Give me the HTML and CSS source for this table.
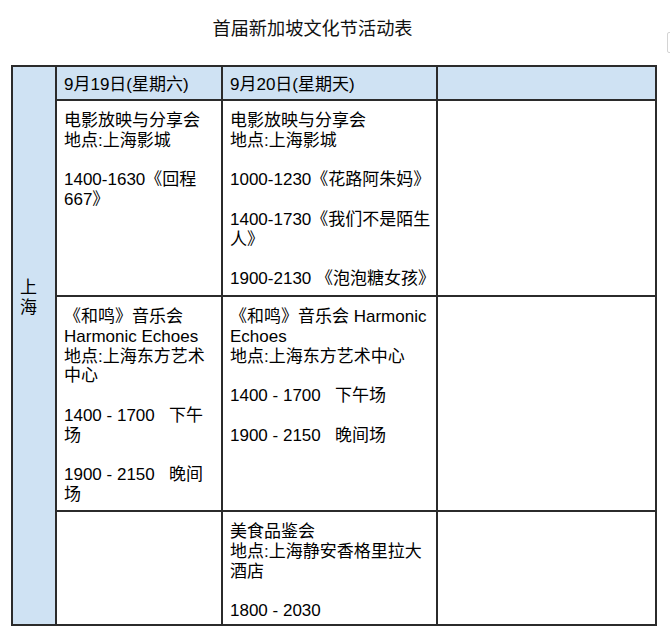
FILE: index.html
```html
<!DOCTYPE html>
<html lang="zh-CN">
<head>
<meta charset="utf-8">
<title>首届新加坡文化节活动表</title>
<link rel="stylesheet" href="styles.css">
</head>
<body>
<div class="page">
  <h1 class="title">首届新加坡文化节活动表</h1>
  <div class="side-handle"></div>
  <div class="schedule">
    <div class="cell label">上海</div>
    <div class="cell head">9月19日(星期六)</div>
    <div class="cell head">9月20日(星期天)</div>
    <div class="cell head"></div>

    <div class="cell body c1">
      <p>电影放映与分享会<br>地点:上海影城</p>
      <p>1400-1630《回程667》</p>
    </div>
    <div class="cell body c2">
      <p>电影放映与分享会<br>地点:上海影城</p>
      <p>1000-1230《花路阿朱妈》</p>
      <p>1400-1730《我们不是陌生人》</p>
      <p>1900-2130 《泡泡糖女孩》</p>
    </div>
    <div class="cell body c3"></div>

    <div class="cell body c1">
      <p>《和鸣》音乐会 Harmonic Echoes<br>地点:上海东方艺术中心</p>
      <p>1400 - 1700&nbsp;&nbsp; 下午场</p>
      <p>1900 - 2150&nbsp;&nbsp; 晚间场</p>
    </div>
    <div class="cell body c2">
      <p>《和鸣》音乐会 Harmonic Echoes<br>地点:上海东方艺术中心</p>
      <p>1400 - 1700&nbsp;&nbsp; 下午场</p>
      <p>1900 - 2150&nbsp;&nbsp; 晚间场</p>
    </div>
    <div class="cell body c3"></div>

    <div class="cell body c1"></div>
    <div class="cell body c2">
      <p>美食品鉴会<br>地点:上海静安香格里拉大酒店</p>
      <p>1800 - 2030</p>
    </div>
    <div class="cell body c3"></div>
  </div>
</div>
</body>
</html>
```

FILE: styles.css
```css
* {
  box-sizing: border-box;
}

html, body {
  margin: 0;
  padding: 0;
  background: #ffffff;
}

body {
  font-family: "Liberation Sans", "Noto Sans CJK SC", sans-serif;
  font-size: 17px;
  color: #000000;
}

.page {
  position: relative;
  width: 670px;
  height: 637px;
  overflow: hidden;
}

.title {
  margin: 0;
  padding-top: 18px;
  width: 625px;
  height: 65px;
  text-align: center;
  font-family: "Noto Sans CJK SC", sans-serif;
  font-size: 18.2px;
  font-weight: 400;
  line-height: 18px;
  color: #111111;
}

.side-handle {
  position: absolute;
  left: 667px;
  top: 32px;
  width: 12px;
  height: 21px;
  border: 1px solid #d4d4d4;
  border-radius: 2px;
}

.schedule {
  display: grid;
  grid-template-columns: 42px 164px 213px 217px;
  grid-template-rows: 32px 194px 213px 112px;
  gap: 2px;
  padding: 2px;
  margin-left: 11px;
  width: fit-content;
  background: #2b2b2b;
}

.cell {
  background: #ffffff;
  line-height: 19.75px;
}

.label {
  grid-row: 1 / span 4;
  background: #cfe2f3;
  padding: 211px 7px 0 7px;
}

.head {
  background: #cfe2f3;
  display: flex;
  align-items: center;
  padding: 3px 4px 0 7px;
}

.body {
  padding: 10px 4px 0 7px;
}

.body.c2 {
  padding-right: 0;
}

.body p {
  margin: 0 0 19.75px 0;
}

.body p:last-child {
  margin-bottom: 0;
}
```
